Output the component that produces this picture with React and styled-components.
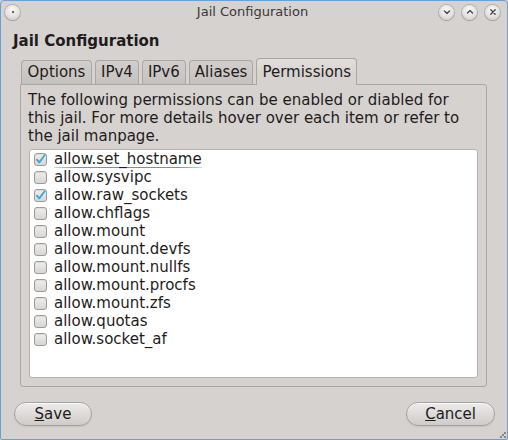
import React from 'react';
import styled, { createGlobalStyle } from 'styled-components';

const Global = createGlobalStyle`
  html, body { margin: 0; padding: 0; background: #d6d2d0; }
  body { font-family: "DejaVu Sans", "Noto Sans", sans-serif; }
  * { box-sizing: border-box; }
`;

const Window = styled.div`
  position: relative;
  width: 508px;
  height: 440px;
  border: 1px solid #6f9fd2;
  border-radius: 4px 4px 2px 2px;
  background: #d6d2d0;
  display: flex;
  flex-direction: column;
  color: #1f1c1b;
  font-family: "DejaVu Sans", "Noto Sans", sans-serif;
  overflow: hidden;
`;

const TitleBar = styled.div`
  height: 22px;
  display: grid;
  grid-template-columns: 80px 1fr 80px;
  align-items: center;
  padding: 0 7px 0 4px;
`;

const TitleText = styled.div`
  text-align: center;
  font-size: 13px;
  line-height: 16px;
  color: #3b3836;
`;

const TitleButtons = styled.div`
  display: flex;
  gap: 8px;
  justify-content: ${p => (p.$right ? 'flex-end' : 'flex-start')};
`;

const CircleButton = styled.div`
  width: 15px;
  height: 15px;
  border-radius: 50%;
  background: radial-gradient(circle at 50% 35%, #fbfafa 0%, #e4e2e0 55%, #c4c0be 100%);
  box-shadow: 0 0 0 1px rgba(120, 114, 110, 0.35), 0 1px 1px rgba(0, 0, 0, 0.15);
  display: flex;
  align-items: center;
  justify-content: center;
`;

const Body = styled.div`
  flex: 1;
  display: flex;
  flex-direction: column;
  padding: 9px 12px 13px 12px;
  min-height: 0;
`;

const Heading = styled.h1`
  margin: 0;
  font-size: 15px;
  line-height: 18px;
  font-weight: bold;
`;

const TabWidget = styled.div`
  flex: 1;
  display: flex;
  flex-direction: column;
  margin: 8px 8px 0 7px;
  min-height: 0;
`;

const TabBar = styled.div`
  height: 26px;
  display: flex;
  align-items: flex-end;
  gap: 3px;
  padding-left: 1px;
  position: relative;
  z-index: 1;
`;

const Tab = styled.div`
  height: ${p => (p.$active ? '27px' : '24px')};
  min-width: ${p => p.$minWidth || 0}px;
  margin-bottom: ${p => (p.$active ? '-1px' : '0')};
  padding: ${p => (p.$active ? '4px' : '2px')} 5px 0 5px;
  border: 1px solid #aaa6a3;
  border-bottom: none;
  border-radius: 4px 4px 0 0;
  background: ${p =>
    p.$active
      ? 'linear-gradient(#e2dfdd, #d6d2d0 60%)'
      : 'linear-gradient(#d2cecc, #c5c1bf)'};
  font-size: 15px;
  line-height: 18px;
  text-align: center;
  white-space: nowrap;
`;

const Panel = styled.div`
  flex: 1;
  display: flex;
  flex-direction: column;
  border: 1px solid #aaa6a3;
  border-radius: 0 3px 3px 3px;
  padding: 6px 8px 8px 8px;
  min-height: 0;
`;

const Description = styled.p`
  margin: 0 0 4px -1px;
  font-size: 15px;
  line-height: 18px;
`;

const ListBox = styled.div`
  flex: 1;
  background: #ffffff;
  border: 1px solid #b5b1af;
  border-radius: 3px;
  display: flex;
  flex-direction: column;
`;

const Row = styled.div`
  height: 18px;
  display: flex;
  align-items: center;
  gap: 7px;
  padding-left: 4px;
`;

const Box = styled.span`
  width: 13px;
  height: 13px;
  flex: none;
  border: 1px solid #9e9a98;
  border-radius: 3px;
  background: linear-gradient(#f0eeed, #d8d5d3);
  box-shadow: inset 0 1px 1px rgba(0, 0, 0, 0.08);
  display: flex;
  align-items: center;
  justify-content: center;
`;

const Label = styled.span`
  font-size: 15px;
  line-height: 18px;
  height: 18px;
  white-space: nowrap;
  background-image: ${p =>
    p.$focused
      ? 'linear-gradient(90deg, rgba(58,167,221,0.35), #3aa7dd 15%, #3aa7dd 85%, rgba(58,167,221,0.35))'
      : 'none'};
  background-repeat: no-repeat;
  background-size: 100% 1px;
  background-position: 0 100%;
`;

const ButtonRow = styled.div`
  margin-top: 15px;
  display: flex;
  justify-content: space-between;
  padding-left: 1px;
`;

const Button = styled.button`
  height: 24px;
  min-width: 78px;
  padding: 0 18px;
  border: 1px solid #a6a29f;
  border-radius: 12px;
  background: linear-gradient(#eeeceb, #dcd9d7 55%, #cfcbc9);
  box-shadow: inset 0 1px 0 rgba(255, 255, 255, 0.7), 0 1px 1px rgba(0, 0, 0, 0.08);
  font-family: "DejaVu Sans", "Noto Sans", sans-serif;
  font-size: 15px;
  line-height: 18px;
  color: #1f1c1b;
  text-align: center;
`;

const Grip = styled.div`
  position: absolute;
  right: 1px;
  bottom: 1px;
  width: 6px;
  height: 6px;
  background:
    radial-gradient(circle, #8a8684 0.8px, transparent 1px) 4px 0 / 2px 2px no-repeat,
    radial-gradient(circle, #8a8684 0.8px, transparent 1px) 2px 2px / 2px 2px no-repeat,
    radial-gradient(circle, #8a8684 0.8px, transparent 1px) 4px 4px / 2px 2px no-repeat,
    radial-gradient(circle, #8a8684 0.8px, transparent 1px) 0 4px / 2px 2px no-repeat;
`;

const Check = () => (
  <svg width="11" height="11" viewBox="0 0 11 11">
    <path d="M1.8 5.6 L4.3 8.4 L9.6 1.2" fill="none" stroke="#3aa7dd" strokeWidth="1.8" strokeLinecap="round" strokeLinejoin="round" />
  </svg>
);

const Glyph = ({ d }) => (
  <svg width="8" height="8" viewBox="0 0 8 8">
    <path d={d} fill="none" stroke="#4a4745" strokeWidth="1.4" strokeLinecap="round" strokeLinejoin="round" />
  </svg>
);

const items = [
  ['allow.set_hostname', true],
  ['allow.sysvipc', false],
  ['allow.raw_sockets', true],
  ['allow.chflags', false],
  ['allow.mount', false],
  ['allow.mount.devfs', false],
  ['allow.mount.nullfs', false],
  ['allow.mount.procfs', false],
  ['allow.mount.zfs', false],
  ['allow.quotas', false],
  ['allow.socket_af', false],
];

const tabs = [
  ['Options', 71],
  ['IPv4', 0],
  ['IPv6', 0],
  ['Aliases', 0],
  ['Permissions', 0],
];

export default function App() {
  return (
    <>
      <Global />
      <Window>
        <TitleBar>
          <TitleButtons>
            <CircleButton>
              <svg width="4" height="4" viewBox="0 0 4 4"><circle cx="2" cy="2" r="1.2" fill="#6a6664" /></svg>
            </CircleButton>
          </TitleButtons>
          <TitleText>Jail Configuration</TitleText>
          <TitleButtons $right>
            <CircleButton><Glyph d="M1.5 3 L4 5.5 L6.5 3" /></CircleButton>
            <CircleButton><Glyph d="M1.5 5 L4 2.5 L6.5 5" /></CircleButton>
            <CircleButton><Glyph d="M1.8 1.8 L6.2 6.2 M6.2 1.8 L1.8 6.2" /></CircleButton>
          </TitleButtons>
        </TitleBar>
        <Body>
          <Heading>Jail Configuration</Heading>
          <TabWidget>
            <TabBar>
              {tabs.map(([t, w]) => (
                <Tab key={t} $minWidth={w} $active={t === 'Permissions'}>{t}</Tab>
              ))}
            </TabBar>
            <Panel>
              <Description>
                The following permissions can be enabled or diabled for<br />
                this jail. For more details hover over each item or refer to<br />
                the jail manpage.
              </Description>
              <ListBox>
                {items.map(([name, checked], i) => (
                  <Row key={name}>
                    <Box>{checked && <Check />}</Box>
                    <Label $focused={i === 0}>{name}</Label>
                  </Row>
                ))}
              </ListBox>
            </Panel>
          </TabWidget>
          <ButtonRow>
            <Button><u>S</u>ave</Button>
            <Button><u>C</u>ancel</Button>
          </ButtonRow>
        </Body>
        <Grip />
      </Window>
    </>
  );
}
